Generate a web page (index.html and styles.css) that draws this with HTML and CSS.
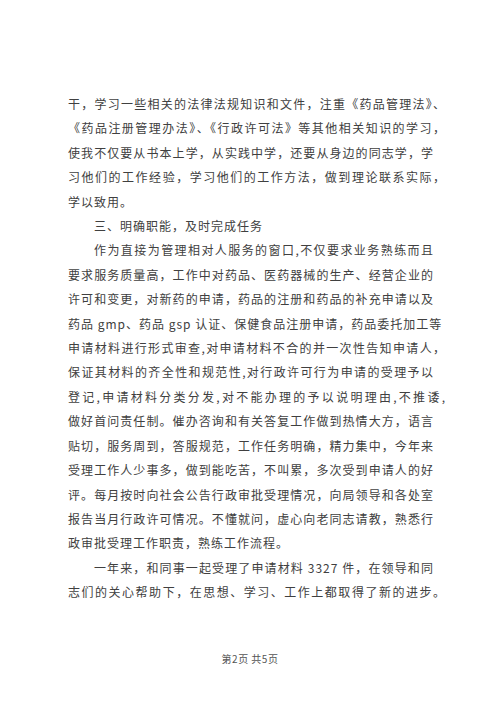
FILE: index.html
```html
<!DOCTYPE html>
<html lang="zh-CN">
<head>
  <meta charset="UTF-8" />
  <meta name="viewport" content="width=device-width, initial-scale=1.0"/>
  <title>第2页</title>
  <link rel="stylesheet" href="styles.css">
</head>
<body>
  <div class="page">
    <div class="text">
      <p class="para">
        <span class="ln hang">干，学习一些相关的法律法规知识和文件，注重《药品管理法》、</span>
        <span class="ln hang">《药品注册管理办法》、《行政许可法》等其他相关知识的学习，</span>
        <span class="ln">使我不仅要从书本上学，从实践中学，还要从身边的同志学，学</span>
        <span class="ln hang">习他们的工作经验，学习他们的工作方法，做到理论联系实际，</span>
        <span class="ln end">学以致用。</span>
      </p>
      <p class="para">
        <span class="ln end indent">三、明确职能，及时完成任务</span>
      </p>
      <p class="para">
        <span class="ln indent">作为直接为管理相对人服务的窗口,不仅要求业务熟练而且</span>
        <span class="ln">要求服务质量高，工作中对药品、医药器械的生产、经营企业的</span>
        <span class="ln">许可和变更，对新药的申请，药品的注册和药品的补充申请以及</span>
        <span class="ln">药品 gmp、药品 gsp 认证、保健食品注册申请，药品委托加工等</span>
        <span class="ln hang">申请材料进行形式审查,对申请材料不合的并一次性告知申请人，</span>
        <span class="ln">保证其材料的齐全性和规范性,对行政许可行为申请的受理予以</span>
        <span class="ln hang">登记,申请材料分类分发,对不能办理的予以说明理由,不推诿,</span>
        <span class="ln">做好首问责任制。催办咨询和有关答复工作做到热情大方，语言</span>
        <span class="ln">贴切，服务周到，答服规范，工作任务明确，精力集中，今年来</span>
        <span class="ln">受理工作人少事多，做到能吃苦，不叫累，多次受到申请人的好</span>
        <span class="ln">评。每月按时向社会公告行政审批受理情况，向局领导和各处室</span>
        <span class="ln">报告当月行政许可情况。不懂就问，虚心向老同志请教，熟悉行</span>
        <span class="ln end">政审批受理工作职责，熟练工作流程。</span>
      </p>
      <p class="para">
        <span class="ln indent">一年来，和同事一起受理了申请材料 3327 件，在领导和同</span>
        <span class="ln hang">志们的关心帮助下，在思想、学习、工作上都取得了新的进步。</span>
      </p>
    </div>
    <div class="footer">第2页 共5页</div>
  </div>
</body>
</html>
```

FILE: styles.css
```css
body {
  margin: 0;
  padding: 0;
  background: #fff;
  font-family: "Noto Sans CJK SC", "Noto Sans", sans-serif;
  color: #404040;
}

.page {
  width: 500px;
  height: 707px;
  padding-top: 92px;
  box-sizing: border-box;
}

.text {
  width: 366px;
  margin-left: 68px;
  font-size: 12px;
  letter-spacing: 1px;
  line-height: 24.4px;
}

.para {
  margin: 0;
}

.ln {
  display: block;
  white-space: nowrap;
  text-align: justify;
  text-align-last: justify;
}

.ln.hang {
  margin-right: -12px;
}

.ln.end {
  text-align-last: left;
}

.ln.indent {
  padding-left: 26px;
}

.footer {
  margin-top: 47px;
  text-align: center;
  font-size: 10px;
  letter-spacing: 0.5px;
  line-height: 14px;
  color: #555;
}
```
